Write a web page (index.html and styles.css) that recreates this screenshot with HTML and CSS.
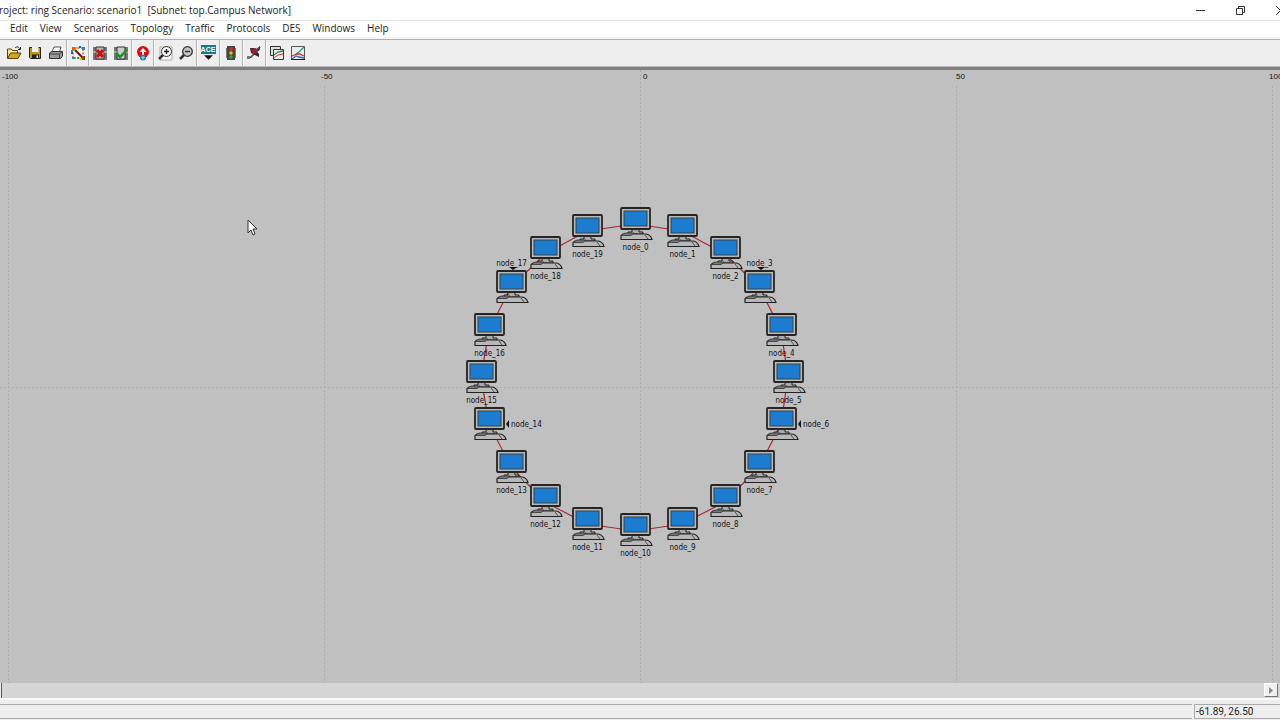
FILE: index.html
```html
<!DOCTYPE html>
<html lang="en">
<head>
<meta charset="utf-8">
<title>Project: ring Scenario: scenario1</title>
<link rel="stylesheet" href="styles.css">
</head>
<body>
<svg class="defs" aria-hidden="true">
  <symbol id="pc" viewBox="0 0 33 34">
    <path d="M12 22h7v3h4v2H8v-2h4z" fill="#aaa" stroke="#222"/>
    <path d="M3 27h22c4 0 6 2 7 5.500H1v-4z" fill="#b8b8b8" stroke="#222" stroke-width="1.200"/>
    <path d="M2 28l3-2h9l-3 2.500H2M25 28l3 4" fill="#777" stroke="#333" stroke-width=".8"/>
    <rect x="1" y="1" width="29" height="21" rx="1" fill="#b8b8b4" stroke="#252525" stroke-width="1.8"/>
    <rect x="4" y="4" width="23" height="15" fill="#1c7dd0" stroke="#34424e"/>
  </symbol>
</svg>
<div class="app">
  <header class="titlebar">
    <h1 class="title">Project: ring Scenario: scenario1&nbsp; [Subnet: top.Campus Network]</h1>
    <div class="window-buttons">
      <button aria-label="Minimize"><svg width="11" height="11"><path d="M1 5.500h9" stroke="#333" fill="none"/></svg></button>
      <button aria-label="Restore"><svg width="11" height="11"><path d="M1.500 3.500h6v6h-6zM3.500 3.500v-2h6v6h-2" stroke="#333" fill="none"/></svg></button>
      <button aria-label="Close"><svg width="11" height="11"><path d="M1 1l9 9M10 1l-9 9" stroke="#333" fill="none"/></svg></button>
    </div>
  </header>
  <nav class="menubar">
    <button>Edit</button><button>View</button><button>Scenarios</button><button>Topology</button><button>Traffic</button><button>Protocols</button><button>DES</button><button>Windows</button><button>Help</button>
  </nav>
  <div class="toolbar" role="toolbar" aria-label="Project tools">
    <div class="group">
      <button aria-label="Open"><svg viewBox="0 0 16 16"><path d="M1.500 13V4h4l1 1.500h5V8" fill="#f7e58a" stroke="#54430b"/><path d="M1.500 13.500L4.500 8h10.500l-3 5.500z" fill="#d0a820" stroke="#54430b"/><path d="M9 3c2-2 4-1 5 1m.500-2v2.500H12" fill="none" stroke="#222"/></svg></button>
      <button aria-label="Save"><svg viewBox="0 0 16 16"><path d="M2.500 2.500h11v11h-10l-1-1z" fill="#b59a16" stroke="#282408"/><path d="M5 2h6.500v5H5z" fill="#eee"/><path d="M5 9.500h7V14H5z" fill="#222"/><path d="M9.500 10.500h1.500V13H9.500z" fill="#eee"/></svg></button>
      <button aria-label="Print"><svg viewBox="0 0 16 16"><path d="M4 7l2-5h7l-1.500 5" fill="#fff" stroke="#555"/><path d="M1.500 8l2-1.500h11V11l-2 2.500h-11z" fill="#999" stroke="#333"/><path d="M2 9h9.500l2.500-2M11.500 9v4" fill="none" stroke="#444"/></svg></button>
    </div>
    <div class="group">
      <button aria-label="Object palette"><svg viewBox="0 0 16 16"><path d="M2 2h12v12H2z" fill="#f7f4f2"/><path d="M4 3h9M3 4v9M13 4v8M4 13h8" stroke="#cf5a48" stroke-width="1.500" stroke-dasharray="2 1.500" fill="none"/><path d="M5 5l8 8" stroke="#5b1616" stroke-width="2"/><path d="M2 2h3v3H2z" fill="#e52"/><path d="M9 1h2v2H9zM1 7h2v2H1z" fill="#16c"/><path d="M12 2h3v3h-3zM2 12h3v2H2z" fill="#28c"/><path d="M12 11h3v4h-3z" fill="#841"/><path d="M7 12h2v2H7zM1 5h2v2H1z" fill="#2a3"/><path d="M6 2h2v2H6zM10 13h2v2h-2z" fill="#eb1"/></svg></button>
    </div>
    <div class="group">
      <button aria-label="Fail selected objects"><svg viewBox="0 0 16 16"><path d="M1 2h14v13H1z" fill="#777"/><path d="M4 2h8v12H4z" fill="#bbb" stroke="#333"/><path d="M1 7h3M12 7h3" stroke="#ddd"/><path d="M5 5l6 7M11 5l-6 7" stroke="#d30d0d" stroke-width="3"/></svg></button>
      <button aria-label="Recover selected objects"><svg viewBox="0 0 16 16"><path d="M1 2h14v13H1z" fill="#777"/><path d="M4 2h8v12H4z" fill="#ccc" stroke="#333"/><path d="M1 7h3M12 7h3" stroke="#ddd"/><path d="M3 8l4 4 7-7" stroke="#189427" stroke-width="2.500" fill="none"/></svg></button>
    </div>
    <div class="group">
      <button aria-label="Go to parent subnet"><svg viewBox="0 0 16 16"><circle cx="8" cy="7" r="6" fill="#d90f18"/><path d="M8 3L4.500 7H7v3h2V7h2.500z" fill="#fff"/><circle cx="8" cy="12.500" r="3" fill="#28789b"/><path d="M6 12l2-1 2 1-2 3z" fill="#83cbd8"/></svg></button>
    </div>
    <div class="group">
      <button aria-label="Zoom in"><svg viewBox="0 0 16 16"><path d="M3 2h12v13H3z" fill="#fff" stroke="#aaa"/><circle cx="9.500" cy="6.500" r="5" fill="#f8f8f8" stroke="#333"/><path d="M9.500 4v5M7 6.500h5" stroke="#222" stroke-width="1.400"/><path d="M6 10l-4 4" stroke="#333" stroke-width="2.500"/></svg></button>
      <button aria-label="Zoom out"><svg viewBox="0 0 16 16"><circle cx="9.500" cy="6.500" r="4.800" fill="#c5c5c5" stroke="#333" stroke-width="1.300"/><path d="M7 6.500h5" stroke="#333" stroke-width="1.400"/><path d="M6 10l-4 4" stroke="#333" stroke-width="2.500"/></svg></button>
    </div>
    <div class="group wide-group">
      <button class="ace" aria-label="ACE"><span>ACE</span><svg viewBox="0 0 10 6"><path d="M0 1h10L5 6z" fill="#111"/></svg></button>
    </div>
    <div class="group wide-group">
      <button aria-label="Run simulation"><svg viewBox="0 0 16 16"><path d="M4 1h8v14H4z" fill="#4b4439"/><path d="M3 3h1v10H3zM12 3h1v10h-1z" fill="#777"/><circle cx="8" cy="4" r="1.800" fill="#e8232d"/><circle cx="8" cy="8" r="1.800" fill="#e8bd20"/><circle cx="8" cy="12" r="1.800" fill="#25a94b"/></svg></button>
    </div>
    <div class="group wide-group">
      <button aria-label="Choose statistics"><svg viewBox="0 0 16 16"><path d="M2 13l3-1 4-4 5-6" stroke="#444" stroke-width="1.500" fill="none"/><path d="M4 3h4l5 6v3l-2-1-6-3z" fill="#29282b"/><path d="M5 4l5-1 1 5-4 1z" fill="#ad1730"/><path d="M10 4l4-3v4l-3 2z" fill="#444"/><path d="M1 11h3v3H1z" fill="#777"/></svg></button>
    </div>
    <div class="group">
      <button aria-label="View results"><svg viewBox="0 0 16 16"><path d="M1.500 1.500h10v9h-10z" fill="#ddd" stroke="#333"/><path d="M4.500 4.500h10v10h-10z" fill="#eee" stroke="#333"/><path d="M5 10l4-3 5-1" stroke="#288847" stroke-width="1.300" fill="none"/><path d="M5 13l4-3 5-1" stroke="#c33" fill="none"/></svg></button>
      <button aria-label="View graph"><svg viewBox="0 0 16 16"><path d="M1.500 1.500h13v13h-13z" fill="#e9edf0" stroke="#555"/><path d="M6 9l3-2 5-5" stroke="#2b9970" stroke-width="1.300" fill="none"/><path d="M2 11l5-2 3 0 4 2" stroke="#c33" stroke-width="1.300" fill="none"/><path d="M2 14l4-3 3 1 5 1" stroke="#36b" stroke-width="1.300" fill="none"/><path d="M1 14.500h14" stroke="#222"/></svg></button>
    </div>
  </div>
  <main class="canvas">
    <div class="ruler">
      <div class="column"><span class="mark wide">-100</span></div>
      <div class="column"><span class="mark">-50</span></div>
      <div class="column"><span class="mark zero">0</span></div>
      <div class="column"><span class="mark mid">50</span></div>
      <div class="column"><span class="mark">100</span></div>
    </div>
    <div class="equator"></div>
    <svg class="links" aria-hidden="true">
      <polygon points="635,154 682,161 725,184 759,217 781,260 788,307 781,354 759,397 725,432 682,454 635,461 587,454 545,432 511,397 489,354 481,307 489,260 511,217 545,184 587,161" fill="none" stroke="#ad2632" stroke-width="1.200"/>
    </svg>
    <div class="node" style="left:620px;top:137px"><svg><use href="#pc"/></svg><span>node_0</span></div>
    <div class="node" style="left:667px;top:144px"><svg><use href="#pc"/></svg><span>node_1</span></div>
    <div class="node" style="left:710px;top:166px"><svg><use href="#pc"/></svg><span>node_2</span></div>
    <div class="node above" style="left:744px;top:200px"><svg><use href="#pc"/></svg><span>node_3</span></div>
    <div class="node" style="left:766px;top:243px"><svg><use href="#pc"/></svg><span>node_4</span></div>
    <div class="node" style="left:773px;top:290px"><svg><use href="#pc"/></svg><span>node_5</span></div>
    <div class="node side" style="left:766px;top:337px"><svg><use href="#pc"/></svg><span>node_6</span></div>
    <div class="node" style="left:744px;top:380px"><svg><use href="#pc"/></svg><span>node_7</span></div>
    <div class="node" style="left:710px;top:414px"><svg><use href="#pc"/></svg><span>node_8</span></div>
    <div class="node" style="left:667px;top:437px"><svg><use href="#pc"/></svg><span>node_9</span></div>
    <div class="node" style="left:620px;top:443px"><svg><use href="#pc"/></svg><span>node_10</span></div>
    <div class="node" style="left:572px;top:437px"><svg><use href="#pc"/></svg><span>node_11</span></div>
    <div class="node" style="left:530px;top:414px"><svg><use href="#pc"/></svg><span>node_12</span></div>
    <div class="node" style="left:496px;top:380px"><svg><use href="#pc"/></svg><span>node_13</span></div>
    <div class="node side" style="left:474px;top:337px"><svg><use href="#pc"/></svg><span>node_14</span></div>
    <div class="node" style="left:466px;top:290px"><svg><use href="#pc"/></svg><span>node_15</span></div>
    <div class="node" style="left:474px;top:243px"><svg><use href="#pc"/></svg><span>node_16</span></div>
    <div class="node above" style="left:496px;top:200px"><svg><use href="#pc"/></svg><span>node_17</span></div>
    <div class="node" style="left:530px;top:166px"><svg><use href="#pc"/></svg><span>node_18</span></div>
    <div class="node" style="left:572px;top:144px"><svg><use href="#pc"/></svg><span>node_19</span></div>
    <svg class="pointer" viewBox="0 0 11 17" aria-hidden="true"><path d="M1 1v13l3-3 2 5 2-1-2-5h4z" fill="#fff" stroke="#333"/></svg>
  </main>
  <div class="scrollbar"><div class="thumb-edge"></div><button class="scroll-right" aria-label="Scroll right"><svg width="5" height="7"><path d="M0 0l4 3.500L0 7z" fill="#888"/></svg></button></div>
  <footer class="status"><div class="message"></div><div class="coords">-61.89, 26.50</div></footer>
</div>
</body>
</html>
```
FILE: styles.css
```css
* { box-sizing: border-box; }
body { margin: 0; overflow: hidden; font-family: "Open Sans", "Noto Sans", sans-serif; color: #222; }
button { border: 0; padding: 0; background: none; font: inherit; color: inherit; }
.defs { display: none; }
.app { display: flex; flex-direction: column; height: 100vh; overflow: hidden; background: #eee; }

.titlebar { display: flex; justify-content: space-between; flex: none; height: 21px; background: #fff; border-bottom: 1px solid #e5e5e5; }
.title { margin: 0 0 0 -7px; font-size: 10px; line-height: 20px; font-weight: 400; white-space: nowrap; }
.window-buttons { display: flex; margin-right: -20px; }
.window-buttons button { width: 40px; display: grid; place-items: center; }

.menubar { display: flex; align-items: flex-start; flex: none; gap: 12px; height: 18px; padding-left: 10px; background: #fff; border-bottom: 2px solid #f4f4f4; font-size: 10px; line-height: 15px; }

.toolbar { display: flex; flex: none; height: 28px; padding-left: 2px; border-top: 1px solid #b0b0b0; border-bottom: 1px solid #bbb; background: #eee; }
.group { display: flex; align-items: center; padding-bottom: 1px; border-left: 1px solid #b5b5b5; box-shadow: inset 1px 0 #fafafa; }
.group:first-child { border-color: transparent; box-shadow: none; }
.group button { width: 21px; height: 22px; display: grid; place-items: center; }
.wide-group button { width: 22px; }
.group svg { width: 16px; height: 16px; }
.group .ace { align-content: center; }
.ace span { width: 15px; background: #137b8b; color: #fff; font: bold 7px/9px "Liberation Sans", sans-serif; text-align: center; }
.group .ace svg { width: 9px; height: 6px; }

.canvas { position: relative; flex: 1; min-height: 0; overflow: hidden; background: #c0c0c0; border-top: 3px solid #808080; }
.ruler { display: flex; height: 100%; padding-left: 8px; }
.column { flex: none; width: 316px; background: repeating-linear-gradient(#aaa 0 2px, transparent 2px 4px) left top / 1px 100% no-repeat; }
.mark { display: block; width: max-content; margin-left: -3px; padding: 1px 0; background: #c0c0c0; font: 8px/12px "Liberation Sans", sans-serif; color: #111; }
.wide { margin-left: -6px; }
.zero { margin-left: 3px; }
.mid { margin-left: 0; }
.equator { position: absolute; left: 0; right: 0; top: 317px; height: 1px; background: repeating-linear-gradient(90deg, #aaa 0 2px, transparent 2px 4px); }
.links { position: absolute; left: 0; top: 0; width: 100%; height: 100%; }
.node { position: absolute; display: flex; flex-direction: column; align-items: center; width: 33px; }
.node svg { width: 33px; height: 34px; }
.node span { margin-right: 2px; font: 8px/14px "DejaVu Sans Condensed", "DejaVu Sans", sans-serif; font-stretch: condensed; color: #111; white-space: nowrap; }
.above span { position: absolute; bottom: 33px; }
.above::before { content: ""; position: absolute; top: -3px; border: 4px solid transparent; border-top: 3px solid #111; border-bottom: 0; }
.side span { position: absolute; left: 37px; top: 11px; }
.side::before { content: ""; position: absolute; left: 32px; top: 13px; border: 4px solid transparent; border-right: 3px solid #111; border-left: 0; }
.pointer { position: absolute; left: 247px; top: 149px; width: 11px; height: 17px; }

.scrollbar { display: flex; justify-content: space-between; flex: none; height: 15px; padding-right: 2px; background: #d6d6d6; }
.thumb-edge { width: 2px; background: #eee; border-right: 1px solid #555; }
.scroll-right { width: 14px; height: 14px; display: grid; place-items: center; background: #f0f0f0; border: 1px solid #fff; border-right-color: #777; border-bottom-color: #777; }
.status { display: flex; flex: none; height: 22px; padding: 4px 0 1px; border-top: 2px solid #fafafa; background: #eee; }
.message { flex: 1; border-top: 1px solid #aaa; border-bottom: 1px solid #aaa; margin-right: 2px; }
.coords { width: 86px; padding-left: 1px; border: 1px solid #aaa; border-right: 0; font: 10px/13px Roboto, sans-serif; }
```
